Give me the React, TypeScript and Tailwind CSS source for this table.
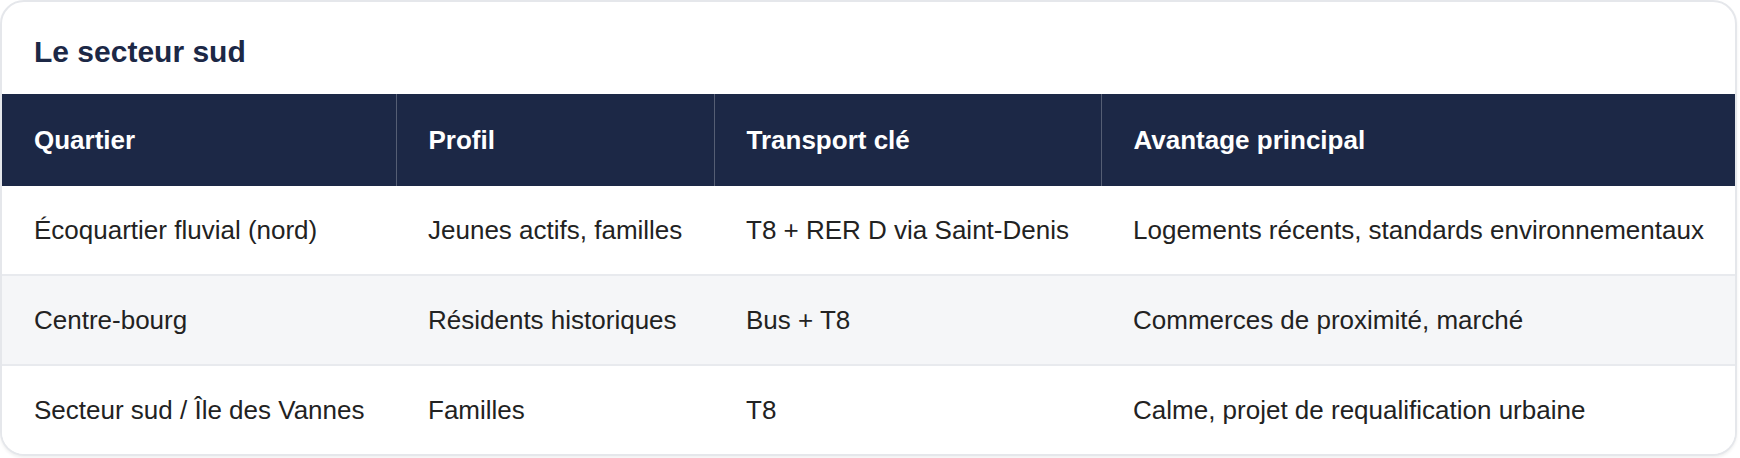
import React from "react";

type Row = {
  quartier: string;
  profil: string;
  transport: string;
  avantage: string;
};

const rows: Row[] = [
  {
    quartier: "Écoquartier fluvial (nord)",
    profil: "Jeunes actifs, familles",
    transport: "T8 + RER D via Saint-Denis",
    avantage: "Logements récents, standards environnementaux",
  },
  {
    quartier: "Centre-bourg",
    profil: "Résidents historiques",
    transport: "Bus + T8",
    avantage: "Commerces de proximité, marché",
  },
  {
    quartier: "Secteur sud / Île des Vannes",
    profil: "Familles",
    transport: "T8",
    avantage: "Calme, projet de requalification urbaine",
  },
];

const App = () => {
  return (
    <div className="w-[1740px] h-[458px] bg-white font-['Liberation_Sans',Arial,sans-serif]">
      <div className="w-[1737px] overflow-hidden rounded-3xl border-2 border-[#e5e7eb] bg-white shadow-[0_2px_3px_rgba(0,0,0,0.06)]">
        <div className="px-8 pt-8 pb-6">
          <h2 className="text-[30px] leading-[36px] font-bold text-[#1c2846]">Le secteur sud</h2>
        </div>

        <table className="w-full table-fixed border-collapse text-left text-[26px] leading-[40px] text-[#222222]">
          <colgroup>
            <col className="w-[394px]" />
            <col className="w-[318px]" />
            <col className="w-[387px]" />
            <col />
          </colgroup>
          <thead>
            <tr className="bg-[#1c2846] text-white">
              <th className="px-8 py-[26px] font-bold border-r border-white/25">Quartier</th>
              <th className="px-8 py-[26px] font-bold border-r border-white/25">Profil</th>
              <th className="px-8 py-[26px] font-bold border-r border-white/25">Transport clé</th>
              <th className="px-8 py-[26px] font-bold">Avantage principal</th>
            </tr>
          </thead>
          <tbody>
            {rows.map((row, i) => (
              <tr
                key={row.quartier}
                className={
                  (i % 2 === 1 ? "bg-[#f5f6f8] " : "bg-white ") +
                  (i < rows.length - 1 ? "border-b-2 border-[#e8eaee]" : "")
                }
              >
                <td className="px-8 py-6 whitespace-nowrap">{row.quartier}</td>
                <td className="px-8 py-6 whitespace-nowrap">{row.profil}</td>
                <td className="px-8 py-6 whitespace-nowrap">{row.transport}</td>
                <td className="px-8 py-6 whitespace-nowrap">{row.avantage}</td>
              </tr>
            ))}
          </tbody>
        </table>
      </div>
    </div>
  );
};

export default App;
